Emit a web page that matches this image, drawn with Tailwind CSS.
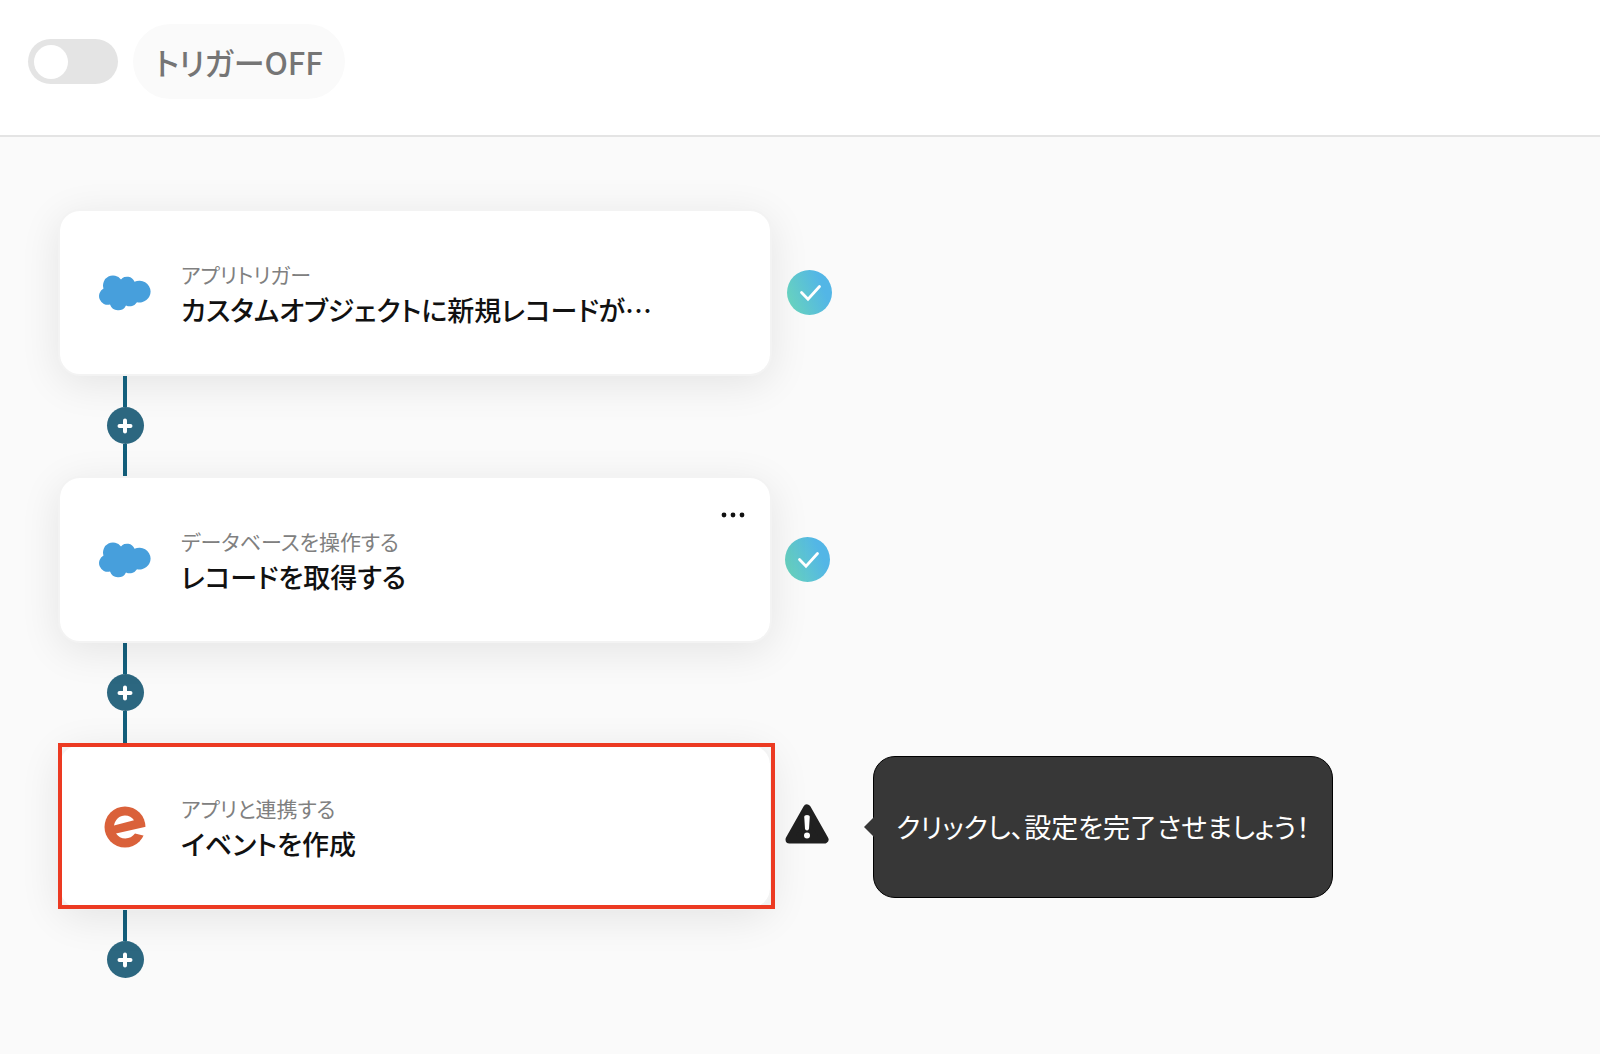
<!DOCTYPE html>
<html lang="ja">
<head>
    <meta charset="UTF-8">
    <meta name="viewport" content="width=device-width, initial-scale=1.0">
    <title>フロー設定</title>
    <!-- Tailwind CSS for styling -->
    <script src="https://cdn.jsdelivr.net/npm/@tailwindcss/browser@4"></script>
</head>
<body class="min-h-screen bg-[#fafafa] font-['Noto_Sans_CJK_JP',sans-serif] text-[#111] [font-feature-settings:'palt']">
    <!-- Shared shapes -->
    <svg class="absolute size-0" aria-hidden="true">
        <linearGradient id="doneGradient" x1="0" y1="0.7" x2="1" y2="0.3">
            <stop offset="0" stop-color="#68d3bd"/>
            <stop offset="0.8" stop-color="#53b6e6"/>
        </linearGradient>
        <symbol id="cloud" viewBox="0 0 52 36">
            <path fill="#479fdc" d="M22 4.400A8 8 0 0 1 35.500 6.800 11.200 11.200 0 0 1 51.600 16.400 11.200 11.200 0 0 1 38 27.300 8.500 8.500 0 0 1 27 30.400 8.700 8.700 0 0 1 11 29.500 8.700 8.700 0 0 1 4.500 13.500 10 10 0 0 1 22 4.400z"/>
        </symbol>
        <symbol id="done" viewBox="0 0 45 45">
            <circle cx="22.5" cy="22.5" r="22.5" fill="url(#doneGradient)"/>
            <path d="M14.5 22.5l6.5 6.7 11.500-12.700" fill="none" stroke="#fff" stroke-width="2.8" stroke-linecap="round"/>
        </symbol>
        <symbol id="plus" viewBox="0 0 16 16">
            <path d="M8 2.500v11M2.500 8h11" stroke="#fff" stroke-width="4" stroke-linecap="round"/>
        </symbol>
    </svg>

    <header class="flex items-start gap-[15px] border-b-2 border-[#e4e4e4] bg-white px-7 pt-6 pb-9">
        <input type="checkbox" role="switch" id="triggerSwitch" class="relative mt-[15px] h-[45px] w-[90px] shrink-0 cursor-pointer appearance-none rounded-full bg-[#e4e4e4] before:absolute before:top-[6px] before:left-[6px] before:size-[34px] before:rounded-full before:bg-white checked:bg-[#2c6780] checked:before:left-[50px]">
        <label for="triggerSwitch" class="cursor-pointer rounded-full bg-[#fafafa] px-[22px] py-[13px] text-[31px] leading-[49px] font-medium text-[#757575]">トリガーOFF</label>
    </header>

    <main class="px-[58px] pt-[72px] pb-16">
        <ol>
            <li>
                <div class="flex items-center gap-[15px]">
                    <article class="flex h-[167px] w-full max-w-[714px] items-center rounded-[22px] border-2 border-[#f3f3f3] bg-white bg-clip-padding pl-[39px] shadow-[0_8px_40px_rgba(0,0,0,0.09)]">
                        <svg class="h-9 w-[52px] shrink-0" role="img" aria-label="Salesforce"><use href="#cloud"/></svg>
                        <div class="min-w-0 pt-[2px] pl-[30px]">
                            <p class="text-[21px] leading-8 text-[#808080]">アプリトリガー</p>
                            <h2 class="truncate text-[27px] leading-10 font-medium">カスタムオブジェクトに新規レコードが…</h2>
                        </div>
                    </article>
                    <svg class="size-[45px] shrink-0" role="img" aria-label="設定済み"><use href="#done"/></svg>
                </div>
                <div class="ml-12 flex w-[38px] flex-col items-center">
                    <span class="h-[31px] w-1 bg-[#135f7c]"></span>
                    <button type="button" aria-label="ステップを追加" class="flex size-[37px] cursor-pointer items-center justify-center rounded-full bg-[#2c6780]">
                        <svg class="size-4"><use href="#plus"/></svg>
                    </button>
                    <span class="h-8 w-1 bg-[#135f7c]"></span>
                </div>
            </li>

            <li>
                <div class="flex items-center gap-[13px]">
                    <article class="relative flex h-[167px] w-full max-w-[714px] items-center rounded-[22px] border-2 border-[#f3f3f3] bg-white bg-clip-padding pl-[39px] shadow-[0_8px_40px_rgba(0,0,0,0.09)]">
                        <svg class="h-9 w-[52px] shrink-0" role="img" aria-label="Salesforce"><use href="#cloud"/></svg>
                        <div class="min-w-0 pt-[2px] pl-[30px]">
                            <p class="text-[21px] leading-8 text-[#808080]">データベースを操作する</p>
                            <h2 class="truncate text-[27px] leading-10 font-medium">レコードを取得する</h2>
                        </div>
                        <button type="button" aria-label="メニュー" class="absolute top-[25px] right-[23px] cursor-pointer">
                            <svg class="h-6 w-7" viewBox="0 0 28 24" fill="#111">
                                <circle cx="5" cy="12" r="2.4"/>
                                <circle cx="14" cy="12" r="2.4"/>
                                <circle cx="23" cy="12" r="2.4"/>
                            </svg>
                        </button>
                    </article>
                    <svg class="size-[45px] shrink-0" role="img" aria-label="設定済み"><use href="#done"/></svg>
                </div>
                <div class="ml-12 flex w-[38px] flex-col items-center">
                    <span class="h-[31px] w-1 bg-[#135f7c]"></span>
                    <button type="button" aria-label="ステップを追加" class="flex size-[37px] cursor-pointer items-center justify-center rounded-full bg-[#2c6780]">
                        <svg class="size-4"><use href="#plus"/></svg>
                    </button>
                    <span class="h-8 w-1 bg-[#135f7c]"></span>
                </div>
            </li>

            <li>
                <div class="flex items-center">
                    <article class="relative flex h-[167px] w-full max-w-[714px] items-center rounded-[22px] border-2 border-[#f3f3f3] bg-white bg-clip-padding pl-[39px] shadow-[0_8px_40px_rgba(0,0,0,0.09)]">
                        <svg class="h-[42px] w-[52px] shrink-0" viewBox="0 0 52 42" role="img" aria-label="Eventbrite">
                            <circle cx="26" cy="21" r="20.5" fill="#da613a"/>
                            <path d="M15 19.5C16 13.500 20.500 9.500 26 9.500c3.800 0 7 1.600 9 4.800z" fill="#fff"/>
                            <path d="M17 27.500L48 20.500V33L45.200 29.800 36 27.600c-2.400 3.200-5.800 4.900-9.600 4.900-4 0-7.300-1.900-9.400-5z" fill="#fff"/>
                        </svg>
                        <div class="min-w-0 pt-[2px] pl-[30px]">
                            <p class="text-[21px] leading-8 text-[#808080]">アプリと連携する</p>
                            <h2 class="truncate text-[27px] leading-10 font-medium">イベントを作成</h2>
                        </div>
                        <!-- Highlight frame -->
                        <span class="pointer-events-none absolute -top-[2px] -right-[5px] -bottom-px -left-[2px] border-4 border-[#ec3a22]"></span>
                    </article>
                    <svg class="mb-[6px] ml-[13px] h-10 w-11 shrink-0" viewBox="0 0 44 40" role="img" aria-label="未設定">
                        <path d="M22 4.500L39.500 35.500H4.500z" fill="#202020" stroke="#202020" stroke-width="8" stroke-linejoin="round"/>
                        <path d="M19.200 12.800q0-1.800 2.800-1.800t2.800 1.800l-.8 11.700q-.2 1.900-2 1.900t-2-1.900z" fill="#fff"/>
                        <circle cx="22" cy="31.500" r="3" fill="#fff"/>
                    </svg>
                    <div role="tooltip" class="relative ml-11 shrink-0 rounded-[22px] border border-black bg-[#373737] px-[22px] py-[50px] text-[27px] leading-10 text-white">
                        <svg class="absolute top-1/2 right-full h-5 w-[10px] -translate-y-1/2" viewBox="0 0 10 20" fill="#373737"><path d="M10 0v20L0 10z"/></svg>
                        クリックし、設定を完了させましょう！
                    </div>
                </div>
                <div class="ml-12 flex w-[38px] flex-col items-center">
                    <span class="h-[31px] w-1 bg-[#135f7c]"></span>
                    <button type="button" aria-label="ステップを追加" class="flex size-[37px] cursor-pointer items-center justify-center rounded-full bg-[#2c6780]">
                        <svg class="size-4"><use href="#plus"/></svg>
                    </button>
                </div>
            </li>
        </ol>
    </main>
</body>
</html>
